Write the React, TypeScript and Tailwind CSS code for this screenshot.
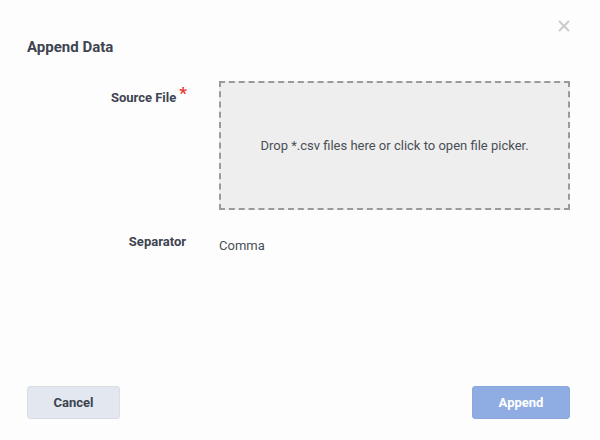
const labelCls = 'w-[187px] shrink-0 flex justify-end text-[13px] font-bold text-[#3e4451]';

const App = () => {
  return (
    <div
      className="relative w-[600px] h-[440px] bg-[#fdfdfd] flex flex-col"
      style={{ fontFamily: 'Roboto, "Liberation Sans", sans-serif' }}
    >
      {/* close */}
      <button className="absolute left-[558px] top-[20px] text-[#c9cbce]">
        <svg width="12" height="12" viewBox="0 0 12 12" fill="none" stroke="currentColor" strokeWidth="2">
          <path d="M1 1L11 11M11 1L1 11" />
        </svg>
      </button>

      <h1 className="pl-[27px] pt-[37px] text-[15px] font-bold text-[#3e4451] leading-5">Append Data</h1>

      <div className="flex flex-col pt-[24px] pr-[30px]">
        {/* source file row */}
        <div className="flex">
          <div className={`${labelCls} pt-[7px]`}>
            <span className="leading-5">Source File</span>
            <span className="text-[#e8382f] text-[17px] leading-none ml-[3px] -mt-[3px]">*</span>
          </div>
          <div className="ml-[32px] flex-1 h-[129px] border-2 border-dashed border-[#9a9a9a] bg-[#eeeeee] flex items-center justify-center">
            <span className="text-[13px] text-[#4a4f57]">Drop *.csv files here or click to open file picker.</span>
          </div>
        </div>

        {/* separator row */}
        <div className="flex mt-[22px]">
          <div className={`${labelCls} pr-[1px]`}>
            <span className="leading-5">Separator</span>
          </div>
          <div className="ml-[32px] text-[13px] text-[#4a4f57] leading-5 pt-[4px]">Comma</div>
        </div>
      </div>

      <div className="mt-auto flex justify-between px-[30px] pb-[21px] pl-[27px]">
        <button className="w-[93px] h-[33px] rounded-[3px] bg-[#e3e7ef] border border-[#d9dde4] text-[13px] font-bold text-[#3e4451]">
          Cancel
        </button>
        <button className="w-[98px] h-[33px] rounded-[3px] bg-[#8fade3] border border-[#8aa8df] text-[13px] font-bold text-white">
          Append
        </button>
      </div>
    </div>
  );
};

export default App;
